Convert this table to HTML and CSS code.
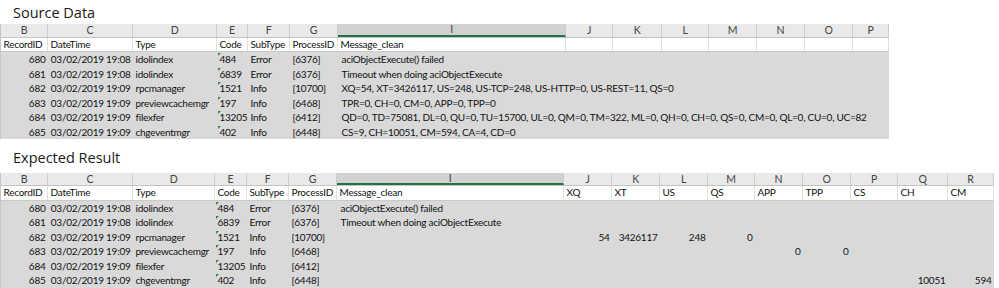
FILE: index.html
```html
<!DOCTYPE html>
<html>
<head>
<meta charset="utf-8">
<link rel="stylesheet" href="styles.css">
</head>
<body>
<div class="sheet">
  <div class="title first">Source Data</div>
  <div class="tbl src">
    <div class="row hdr">
      <div class="c">B</div><div class="c">C</div><div class="c">D</div><div class="c">E</div><div class="c">F</div><div class="c">G</div><div class="c sel">I</div><div class="c">J</div><div class="c">K</div><div class="c">L</div><div class="c">M</div><div class="c">N</div><div class="c">O</div><div class="c">P</div>
    </div>
    <div class="row fld">
      <div class="c">RecordID</div><div class="c">DateTime</div><div class="c">Type</div><div class="c">Code</div><div class="c">SubType</div><div class="c">ProcessID</div><div class="c">Message_clean</div><div class="c"></div><div class="c"></div><div class="c"></div><div class="c"></div><div class="c"></div><div class="c"></div><div class="c"></div>
    </div>
    <div class="row data">
      <div class="c r">680</div><div class="c r">03/02/2019 19:08</div><div class="c">idolindex</div><div class="c code">484</div><div class="c">Error</div><div class="c">[6376]</div><div class="c msg">aciObjectExecute() failed</div>
    </div>
    <div class="row data">
      <div class="c r">681</div><div class="c r">03/02/2019 19:08</div><div class="c">idolindex</div><div class="c code">6839</div><div class="c">Error</div><div class="c">[6376]</div><div class="c msg">Timeout when doing aciObjectExecute</div>
    </div>
    <div class="row data">
      <div class="c r">682</div><div class="c r">03/02/2019 19:09</div><div class="c">rpcmanager</div><div class="c code">1521</div><div class="c">Info</div><div class="c">[10700]</div><div class="c msg">XQ=54, XT=3426117, US=248, US-TCP=248, US-HTTP=0, US-REST=11, QS=0</div>
    </div>
    <div class="row data">
      <div class="c r">683</div><div class="c r">03/02/2019 19:09</div><div class="c">previewcachemgr</div><div class="c code">197</div><div class="c">Info</div><div class="c">[6468]</div><div class="c msg">TPR=0, CH=0, CM=0, APP=0, TPP=0</div>
    </div>
    <div class="row data">
      <div class="c r">684</div><div class="c r">03/02/2019 19:09</div><div class="c">filexfer</div><div class="c code">13205</div><div class="c">Info</div><div class="c">[6412]</div><div class="c msg">QD=0, TD=75081, DL=0, QU=0, TU=15700, UL=0, QM=0, TM=322, ML=0, QH=0, CH=0, QS=0, CM=0, QL=0, CU=0, UC=82</div>
    </div>
    <div class="row data">
      <div class="c r">685</div><div class="c r">03/02/2019 19:09</div><div class="c">chgeventmgr</div><div class="c code">402</div><div class="c">Info</div><div class="c">[6448]</div><div class="c msg">CS=9, CH=10051, CM=594, CA=4, CD=0</div>
    </div>
  </div>

  <div class="title second">Expected Result</div>
  <div class="tbl res">
    <div class="row hdr">
      <div class="c">B</div><div class="c">C</div><div class="c">D</div><div class="c">E</div><div class="c">F</div><div class="c">G</div><div class="c sel">I</div><div class="c">J</div><div class="c">K</div><div class="c">L</div><div class="c">M</div><div class="c">N</div><div class="c">O</div><div class="c">P</div><div class="c">Q</div><div class="c">R</div>
    </div>
    <div class="row fld">
      <div class="c">RecordID</div><div class="c">DateTime</div><div class="c">Type</div><div class="c">Code</div><div class="c">SubType</div><div class="c">ProcessID</div><div class="c">Message_clean</div><div class="c">XQ</div><div class="c">XT</div><div class="c">US</div><div class="c">QS</div><div class="c">APP</div><div class="c">TPP</div><div class="c">CS</div><div class="c">CH</div><div class="c">CM</div>
    </div>
    <div class="row data">
      <div class="c r">680</div><div class="c r">03/02/2019 19:08</div><div class="c">idolindex</div><div class="c code">484</div><div class="c">Error</div><div class="c">[6376]</div><div class="c msg">aciObjectExecute() failed</div>
    </div>
    <div class="row data">
      <div class="c r">681</div><div class="c r">03/02/2019 19:08</div><div class="c">idolindex</div><div class="c code">6839</div><div class="c">Error</div><div class="c">[6376]</div><div class="c msg">Timeout when doing aciObjectExecute</div>
    </div>
    <div class="row data">
      <div class="c r">682</div><div class="c r">03/02/2019 19:09</div><div class="c">rpcmanager</div><div class="c code">1521</div><div class="c">Info</div><div class="c">[10700]</div><div class="c msg"></div><div class="c r">54</div><div class="c r">3426117</div><div class="c r">248</div><div class="c r">0</div>
    </div>
    <div class="row data">
      <div class="c r">683</div><div class="c r">03/02/2019 19:09</div><div class="c">previewcachemgr</div><div class="c code">197</div><div class="c">Info</div><div class="c">[6468]</div><div class="c msg"></div><div class="c"></div><div class="c"></div><div class="c"></div><div class="c"></div><div class="c r">0</div><div class="c r">0</div>
    </div>
    <div class="row data">
      <div class="c r">684</div><div class="c r">03/02/2019 19:09</div><div class="c">filexfer</div><div class="c code">13205</div><div class="c">Info</div><div class="c">[6412]</div><div class="c msg"></div>
    </div>
    <div class="row data">
      <div class="c r">685</div><div class="c r">03/02/2019 19:09</div><div class="c">chgeventmgr</div><div class="c code">402</div><div class="c">Info</div><div class="c">[6448]</div><div class="c msg"></div><div class="c"></div><div class="c"></div><div class="c"></div><div class="c"></div><div class="c"></div><div class="c"></div><div class="c"></div><div class="c r">10051</div><div class="c r">594</div>
    </div>
  </div>
</div>
</body>
</html>
```

FILE: styles.css
```css
html, body {
  margin: 0;
  padding: 0;
  background: #ffffff;
}

.sheet {
  width: 999px;
  height: 288px;
  overflow: hidden;
  font-family: "Lato", "Liberation Sans", sans-serif;
  font-size: 10px;
  letter-spacing: -0.25px;
  color: #111;
}

.title {
  font-family: "Open Sans", "Liberation Sans", sans-serif;
  font-size: 14.5px;
  letter-spacing: 0;
  line-height: 23px;
  color: #1a1a1a;
  padding-left: 13px;
}

.title.first {
  padding-top: 1px;
  height: 23px;
}

.title.second {
  padding-top: 7px;
  height: 26.5px;
}

.tbl {
  border-left: 1px solid #c6c6c6;
  margin-left: 0;
}

.src {
  width: 888px;
}

.res {
  width: 993px;
}

.row {
  display: grid;
}

.src .row {
  grid-template-columns: 47px 85px 84px 31px 42px 48px 228px 47px 49px 47px 48px 48px 48px 36px;
}

.res .row {
  grid-template-columns: 47px 85px 82px 32px 42px 48px 227px 48px 48px 48px 47px 48px 48px 47px 50px 46px;
}

.c {
  position: relative;
  white-space: nowrap;
  padding: 0 2.5px;
  min-width: 0;
}

.c.r {
  text-align: right;
}

.hdr {
  height: 13.5px;
  background: #e9e9e9;
  border-bottom: 1px solid #c4c4c4;
  box-sizing: border-box;
}

.hdr .c {
  text-align: center;
  color: #444;
  font-size: 10.5px;
  line-height: 12.5px;
  border-right: 1px solid #cdcdcd;
  overflow: hidden;
}

.hdr .c.sel {
  background: #d2d2d2;
  border-bottom: 2px solid #217346;
  line-height: 11px;
}

.fld {
  height: 14.5px;
  background: #fff;
  border-bottom: 1px solid #c9c9c9;
  box-sizing: border-box;
}

.fld .c {
  line-height: 13.5px;
  border-right: 1px solid #e0e0e0;
  overflow: hidden;
}

.data {
  height: 14.5px;
  background: #d9d9d9;
}

.data .c {
  line-height: 13.5px;
  padding-top: 1px;
}

.data .c.msg {
  overflow: visible;
  padding-left: 3.5px;
}

.code::before {
  content: "";
  position: absolute;
  left: 1px;
  top: 1px;
  width: 0;
  height: 0;
  border-top: 3.5px solid #2f8a3f;
  border-right: 3.5px solid transparent;
}
```
